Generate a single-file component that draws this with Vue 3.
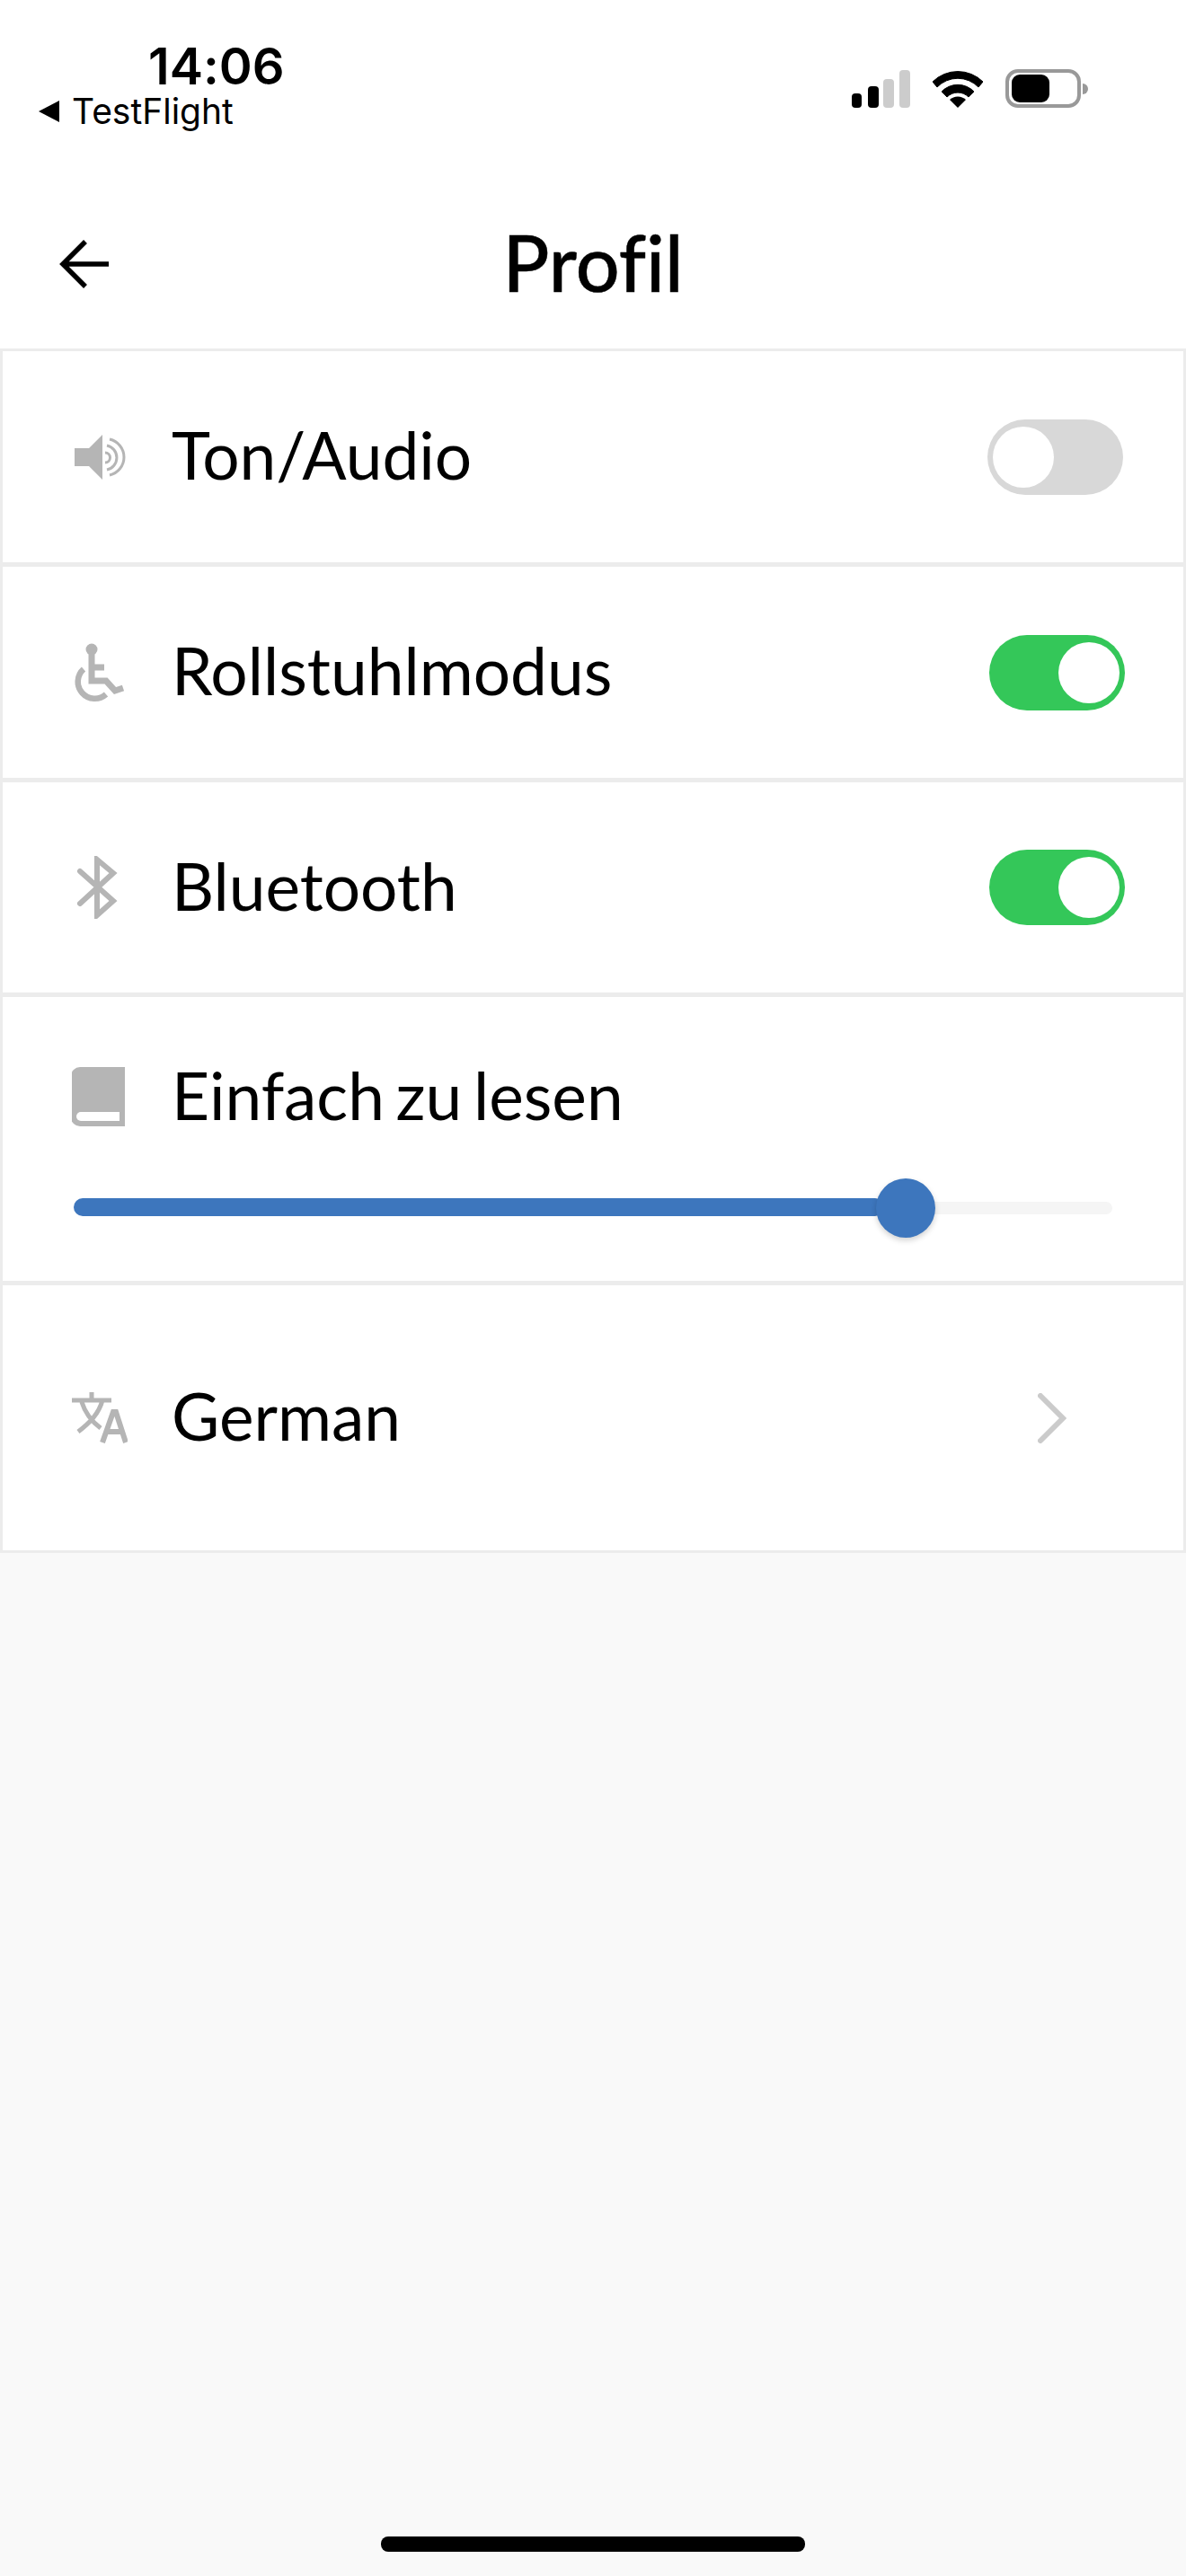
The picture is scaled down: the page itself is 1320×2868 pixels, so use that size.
<script setup>
import { ref } from 'vue'

const sound = ref(false)
const wheelchair = ref(true)
const bluetooth = ref(true)
const level = 78
</script>

<template>
  <div class="page">
    <div class="status">
      <div class="status-left">
        <div class="clock">14:06</div>
        <div class="back-app"><span class="tri"></span>TestFlight</div>
      </div>
      <div class="status-right">
        <svg width="65" height="42" viewBox="0 0 65 42">
          <rect x="0" y="26" width="11" height="16" rx="4" fill="#000" />
          <rect x="18" y="18" width="12" height="24" rx="4" fill="#000" />
          <rect x="35" y="10" width="12" height="32" rx="4" fill="#ccc" />
          <rect x="53" y="0" width="12" height="42" rx="4" fill="#ccc" />
        </svg>
        <svg class="wifi" width="56" height="42" viewBox="0 0 56 42">
          <path d="M0 13 A40 40 0 0 1 56 13 L51 19 A32 32 0 0 0 5 19 Z" fill="#000" stroke="#000" stroke-width="1" stroke-linejoin="round" />
          <path d="M10 24 A25 25 0 0 1 46 24 L40 30 A17 17 0 0 0 16 30 Z" fill="#000" stroke="#000" stroke-width="1" stroke-linejoin="round" />
          <path d="M19 33 A13 13 0 0 1 37 33 L28 42 Z" fill="#000" />
        </svg>
        <div class="battery"><div class="battery-fill"></div></div>
        <div class="battery-tip"></div>
      </div>
    </div>

    <div class="header">
      <svg class="arrow" width="56" height="54" viewBox="0 0 56 54">
        <path d="M55 27 H4 M29 2 L4 27 L29 52" fill="none" stroke="#000" stroke-width="5.5" />
      </svg>
      <h1>Profil</h1>
    </div>

    <div class="list">
      <div class="row">
        <div class="icon">
          <svg width="62" height="62" viewBox="0 0 62 62">
            <path d="M3 21 H19 L34 6 V56 L19 41 H3 Z" fill="#b5b5b5" />
            <path d="M37 26 A5.500 5.500 0 0 1 37 37 M39 18 A13.800 13.800 0 0 1 39 45 M42 11 A20.500 20.500 0 0 1 42 51" fill="none" stroke="#b5b5b5" stroke-width="3" />
          </svg>
        </div>
        <span class="label">Ton/Audio</span>
        <div class="toggle" :class="{ on: sound }"><div class="knob"></div></div>
      </div>

      <div class="row">
        <div class="icon">
          <svg width="62" height="68" viewBox="0 0 62 68">
            <circle cx="22" cy="8" r="6.5" fill="#b5b5b5" />
            <path d="M22 12 V43 H38 L48 54 L57 51 M22 28 H36" fill="none" stroke="#b5b5b5" stroke-width="7" />
            <path d="M13 30 A18 18 0 1 0 38 58" fill="none" stroke="#b5b5b5" stroke-width="6.500" />
          </svg>
        </div>
        <span class="label">Rollstuhlmodus</span>
        <div class="toggle" :class="{ on: wheelchair }"><div class="knob"></div></div>
      </div>

      <div class="row">
        <div class="icon">
          <svg width="62" height="70" viewBox="0 0 62 70">
            <path d="M9 17 L46 50 L28 66 V4 L46 19 L9 53" fill="none" stroke="#b5b5b5" stroke-width="6" stroke-linecap="round" />
          </svg>
        </div>
        <span class="label">Bluetooth</span>
        <div class="toggle" :class="{ on: bluetooth }"><div class="knob"></div></div>
      </div>

      <div class="row row-slider">
        <div class="slider-head">
          <div class="icon">
            <svg width="62" height="66" viewBox="1 0 62 66">
              <path d="M10 0 H60 V66 H10 A10 10 0 0 1 0 56 V10 A10 10 0 0 1 10 0 Z" fill="#b5b5b5" />
              <path d="M11 50 H54 V60 H11 A5 5 0 0 1 11 50 Z" fill="#fff" />
            </svg>
          </div>
          <span class="label">Einfach zu lesen</span>
        </div>
        <div class="slider">
          <div class="slider-fill" :style="{ width: level + '%' }"></div>
          <div class="slider-thumb"></div>
        </div>
      </div>

      <div class="row row-lang">
        <div class="icon">
          <svg width="62" height="58" viewBox="0 0 62 58">
            <path d="M0 9 H44 M22 0 V9 M34 9 C30 24 20 34 7 44 M11 11 C15 24 24 34 32 40" fill="none" stroke="#b5b5b5" stroke-width="5" />
            <path d="M34 56 L46 22 H49 L60 56 M39 44 H56" fill="none" stroke="#b5b5b5" stroke-width="6" />
          </svg>
        </div>
        <span class="label">German</span>
        <svg class="chevron" width="32" height="56" viewBox="0 0 32 56">
          <path d="M3 3 L28 28 L3 53" fill="none" stroke="#cbcbcb" stroke-width="6" stroke-linecap="round" />
        </svg>
      </div>
    </div>

    <div class="home-wrap"><div class="home-bar"></div></div>
  </div>
</template>

<style>
html, body { margin: 0; padding: 0; background: #f9f9f9; }
</style>

<style scoped>
.page {
  width: 1320px;
  height: 2868px;
  display: flex;
  flex-direction: column;
  background: #f9f9f9;
  font-family: Lato, "Liberation Sans", sans-serif;
  font-variant-ligatures: none;
  color: #000;
}

.status {
  height: 240px;
  box-sizing: border-box;
  padding: 42px 0 0 43px;
  background: #fff;
  display: flex;
  justify-content: space-between;
  align-items: flex-start;
  flex-shrink: 0;
}
.status-left { font-family: Inter, "Liberation Sans", sans-serif; }
.clock {
  margin-left: 122px;
  font-size: 56px;
  line-height: 64px;
  font-weight: 600;
}
.back-app {
  display: flex;
  align-items: center;
  font-size: 39px;
  line-height: 44px;
  font-weight: 400;
  margin-top: -4px;
}
.tri {
  width: 0;
  height: 0;
  border-top: 12px solid transparent;
  border-bottom: 12px solid transparent;
  border-right: 23px solid #000;
  margin-right: 14px;
}
.status-right {
  display: flex;
  align-items: center;
  padding: 35px 0 0 0;
  margin-right: 109px;
}
.wifi { margin-left: 25px; }
.battery {
  box-sizing: border-box;
  width: 84px;
  height: 43px;
  margin-left: 25px;
  border: 4px solid #999;
  border-radius: 14px;
  padding: 2px 3px;
}
.battery-fill {
  width: 42px;
  height: 31px;
  background: #000;
  border-radius: 9px;
}
.battery-tip {
  width: 6px;
  height: 12px;
  margin-left: 2px;
  background: #999;
  border-radius: 0 6px 6px 0;
}

.header {
  height: 148px;
  box-sizing: border-box;
  padding-top: 27px;
  background: #fff;
  display: grid;
  grid-template-columns: 1fr auto 1fr;
  align-items: start;
  flex-shrink: 0;
}
.arrow { margin-left: 66px; }
h1 {
  margin: -25px 0 0;
  font-size: 86px;
  font-weight: 500;
  line-height: 100px;
  -webkit-text-stroke: 0.5px #000;
}

.list { flex-shrink: 0; }
.row {
  box-sizing: border-box;
  height: 240px;
  display: flex;
  align-items: center;
  background: #fff;
  border: 3px solid #ececec;
  border-bottom-width: 2px;
  padding: 0 65px 0 77px;
}
.row:nth-child(3) { height: 239px; }
.row-slider {
  height: 321px;
  flex-direction: column;
  align-items: stretch;
  padding: 65px 0 0 0;
}
.slider-head {
  display: flex;
  align-items: center;
  height: 92px;
  padding: 0 0 0 77px;
}
.row-lang {
  height: 301px;
  border-bottom-width: 3px;
  padding-right: 130px;
}
.icon {
  width: 62px;
  flex: 0 0 62px;
  margin-right: 49px;
  display: flex;
  align-items: center;
  justify-content: center;
}
.label {
  flex: 1;
  font-size: 73px;
  word-spacing: -6px;
  line-height: 90px;
  font-weight: 400;
  margin-top: -5px;
}

.toggle {
  box-sizing: border-box;
  width: 151px;
  height: 84px;
  margin-right: 2px;
  border-radius: 42px;
  padding: 8px 6px;
  background: #d8d8d8;
  display: flex;
}
.toggle.on {
  margin-right: 0;
  background: #34c759;
  justify-content: flex-end;
}
.knob {
  width: 68px;
  height: 68px;
  border-radius: 50%;
  background: #fff;
}

.slider {
  position: relative;
  margin: 71px 79px 0 79px;
  height: 14px;
  border-radius: 7px;
  background: #f5f5f5;
}
.slider-fill {
  position: absolute;
  left: 0;
  top: -4px;
  height: 20px;
  border-radius: 10px;
  background: #3d76bd;
}
.slider-thumb {
  position: absolute;
  left: 893px;
  top: -26px;
  width: 66px;
  height: 66px;
  border-radius: 50%;
  background: #3d76bd;
  box-shadow: 0 3px 6px rgba(0, 0, 0, 0.18);
}

.home-wrap {
  margin-top: auto;
  padding-bottom: 27px;
  display: flex;
  justify-content: center;
}
.home-bar {
  width: 472px;
  height: 17px;
  border-radius: 8px;
  background: #000;
}
</style>
